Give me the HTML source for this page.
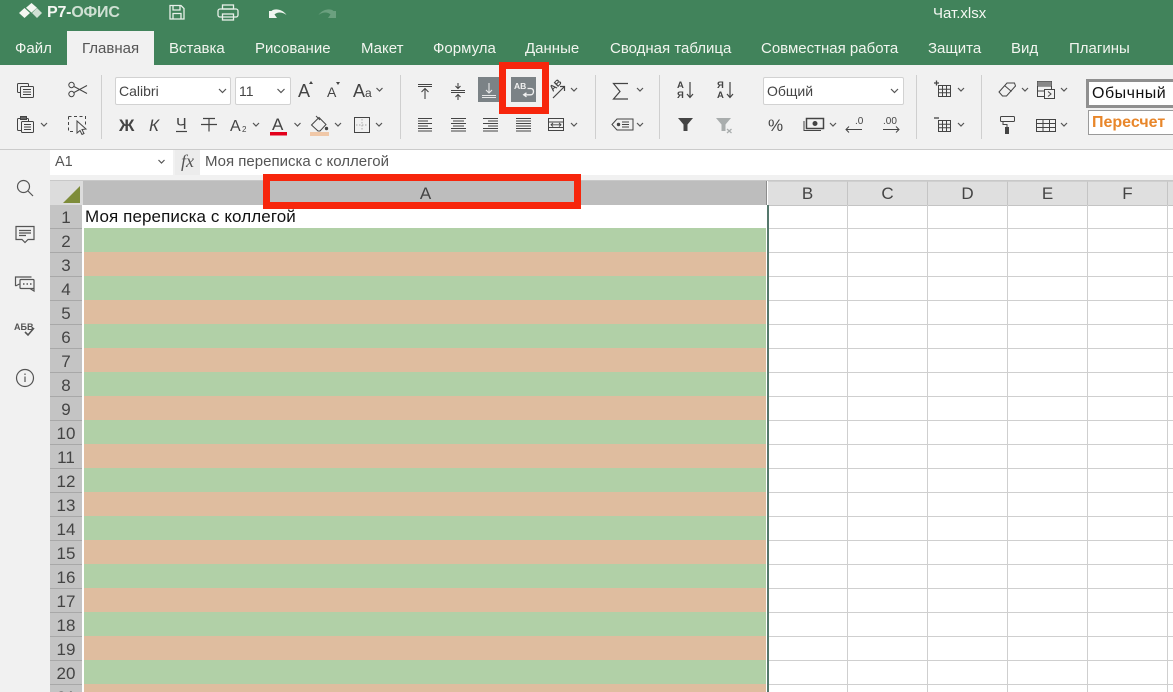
<!DOCTYPE html>
<html><head><meta charset="utf-8">
<style>
html,body{margin:0;padding:0;width:1173px;height:692px;overflow:hidden;background:#fff;font-family:"Liberation Sans",sans-serif}
#page{position:relative;width:1173px;height:692px;overflow:hidden}
.a{position:absolute}
#top{left:0;top:0;width:1173px;height:65px;background:#41835b}
.t{position:absolute;top:41px;font-size:15px;line-height:16px;color:#f2f5ef;white-space:nowrap}
#tb{left:0;top:65px;width:1173px;height:84px;background:#f1f1f1;border-bottom:1px solid #cbcbcb}
.box{position:absolute;background:#fff;border:1px solid #d2d2d2;border-radius:2px;box-sizing:border-box;font-size:14px;color:#444;line-height:26px;padding-left:3px}
.rn{position:absolute;left:50px;width:32px;height:23px;background:#c4c4c4;border-bottom:1px solid #a8a8a8;font-size:17px;line-height:25px;text-align:center;color:#444}
.ch{position:absolute;top:181px;height:23px;background:#dfdfdf;border-right:1px solid #c4c4c4;border-bottom:1px solid #c4c4c4;border-top:1px solid #cfcfcf;font-size:17px;line-height:24px;text-align:center;color:#444;box-sizing:content-box}
.band{position:absolute;left:84px;width:682px;height:24px}
.g{background:#b1d0a7}.o{background:#dfbd9f}
.hl{position:absolute;left:769px;width:404px;height:1px;background:#cfcfcf}
.vl{position:absolute;top:205px;width:1px;height:487px;background:#cfcfcf}
svg{position:absolute;left:0;top:0}
svg text{font-family:"Liberation Sans",sans-serif}
</style></head><body><div id="page">
<div class="a" id="top"></div>
<div class="a" style="left:67px;top:31px;width:87px;height:34px;background:#f1f1f1"></div>
<div class="t" style="left:15px">Файл</div>
<div class="t" style="left:82px;color:#555">Главная</div>
<div class="t" style="left:169px">Вставка</div>
<div class="t" style="left:255px">Рисование</div>
<div class="t" style="left:361px">Макет</div>
<div class="t" style="left:433px">Формула</div>
<div class="t" style="left:525px">Данные</div>
<div class="t" style="left:610px">Сводная таблица</div>
<div class="t" style="left:761px">Совместная работа</div>
<div class="t" style="left:928px">Защита</div>
<div class="t" style="left:1011px">Вид</div>
<div class="t" style="left:1069px">Плагины</div>
<div class="a" style="left:933px;top:6px;font-size:15px;line-height:16px;color:#f4f7f2">Чат.xlsx</div>
<div class="a" style="left:47px;top:3px;font-size:16px;line-height:20px;font-weight:bold;color:#f4f7f2;letter-spacing:-.2px">Р7-<span style="color:#cfe0d3">ОФИС</span></div>

<div class="a" id="tb"></div>
<div class="box" style="left:115px;top:77px;width:116px;height:28px">Calibri</div>
<div class="box" style="left:235px;top:77px;width:56px;height:28px">11</div>
<div class="box" style="left:763px;top:77px;width:141px;height:28px">Общий</div>
<div class="a" style="left:1086px;top:79px;width:87px;height:29px;box-sizing:border-box;border:3px solid #8f8f8f;border-right:0;background:#fff;font-size:16px;line-height:24px;color:#111;padding-left:3px;letter-spacing:.5px;white-space:nowrap;overflow:hidden">Обычный</div>
<div class="a" style="left:1088px;top:110px;width:85px;height:25px;box-sizing:border-box;border:1px solid #9a9a9a;border-right:0;background:#fff;font-size:16px;line-height:24px;color:#e8862a;font-weight:bold;padding-left:3px;white-space:nowrap;overflow:hidden">Пересчет</div>

<!-- formula bar -->
<div class="a" style="left:0;top:150px;width:1173px;height:31px;background:#f1f1f1"></div>
<div class="a" style="left:50px;top:150px;width:123px;height:25px;background:#fff;font-size:14.5px;line-height:24px;color:#555;text-indent:5px">A1</div>
<div class="a" style="left:175px;top:150px;width:25px;height:25px;background:#ececec;font-family:'Liberation Serif',serif;font-style:italic;font-size:18px;line-height:23px;text-align:center;color:#555">fx</div>
<div class="a" style="left:200px;top:150px;width:973px;height:25px;background:#fff;font-size:15px;line-height:24px;color:#555;text-indent:5px">Моя переписка с коллегой</div>
<div class="a" style="left:50px;top:175px;width:1123px;height:5px;background:#f1f1f1;border-bottom:1px solid #c8c8c8"></div>

<!-- sidebar -->
<div class="a" style="left:0;top:150px;width:50px;height:542px;background:#f1f1f1"></div>

<!-- headers -->
<div class="a" style="left:50px;top:181px;width:33px;height:24px;background:#dcdcdc"></div>
<div class="a" style="left:83px;top:181px;width:684px;height:24px;background:#bdbdbd;font-size:17px;line-height:25px;text-align:center;color:#444;padding-left:2px;box-sizing:border-box;border-right:1px solid #8d8d8d">A</div>
<div class="ch" style="left:768px;width:79px">B</div>
<div class="ch" style="left:848px;width:79px">C</div>
<div class="ch" style="left:928px;width:79px">D</div>
<div class="ch" style="left:1008px;width:79px">E</div>
<div class="ch" style="left:1088px;width:79px">F</div>
<div class="ch" style="left:1168px;width:5px;border-right:0"></div>

<!-- row numbers -->
<div class="rn" style="top:205px">1</div>
<div class="rn" style="top:229px">2</div>
<div class="rn" style="top:253px">3</div>
<div class="rn" style="top:277px">4</div>
<div class="rn" style="top:301px">5</div>
<div class="rn" style="top:325px">6</div>
<div class="rn" style="top:349px">7</div>
<div class="rn" style="top:373px">8</div>
<div class="rn" style="top:397px">9</div>
<div class="rn" style="top:421px">10</div>
<div class="rn" style="top:445px">11</div>
<div class="rn" style="top:469px">12</div>
<div class="rn" style="top:493px">13</div>
<div class="rn" style="top:517px">14</div>
<div class="rn" style="top:541px">15</div>
<div class="rn" style="top:565px">16</div>
<div class="rn" style="top:589px">17</div>
<div class="rn" style="top:613px">18</div>
<div class="rn" style="top:637px">19</div>
<div class="rn" style="top:661px">20</div>
<div class="rn" style="top:685px;height:7px;border:0;overflow:hidden">21</div>

<!-- bands -->
<div class="band g" style="top:228px"></div><div class="band o" style="top:252px"></div>
<div class="band g" style="top:276px"></div><div class="band o" style="top:300px"></div>
<div class="band g" style="top:324px"></div><div class="band o" style="top:348px"></div>
<div class="band g" style="top:372px"></div><div class="band o" style="top:396px"></div>
<div class="band g" style="top:420px"></div><div class="band o" style="top:444px"></div>
<div class="band g" style="top:468px"></div><div class="band o" style="top:492px"></div>
<div class="band g" style="top:516px"></div><div class="band o" style="top:540px"></div>
<div class="band g" style="top:564px"></div><div class="band o" style="top:588px"></div>
<div class="band g" style="top:612px"></div><div class="band o" style="top:636px"></div>
<div class="band g" style="top:660px"></div><div class="band o" style="top:684px;height:8px"></div>
<div class="a" style="left:85px;top:207px;font-size:17px;line-height:20px;color:#111;white-space:nowrap;letter-spacing:.1px">Моя переписка с коллегой</div>
<div class="a" style="left:767px;top:205px;width:2px;height:487px;background:#55786c"></div>

<!-- grid lines -->
<div class="hl" style="top:228px"></div><div class="hl" style="top:252px"></div><div class="hl" style="top:276px"></div><div class="hl" style="top:300px"></div><div class="hl" style="top:324px"></div><div class="hl" style="top:348px"></div><div class="hl" style="top:372px"></div><div class="hl" style="top:396px"></div><div class="hl" style="top:420px"></div><div class="hl" style="top:444px"></div><div class="hl" style="top:468px"></div><div class="hl" style="top:492px"></div><div class="hl" style="top:516px"></div><div class="hl" style="top:540px"></div><div class="hl" style="top:564px"></div><div class="hl" style="top:588px"></div><div class="hl" style="top:612px"></div><div class="hl" style="top:636px"></div><div class="hl" style="top:660px"></div><div class="hl" style="top:684px"></div>
<div class="vl" style="left:847px"></div><div class="vl" style="left:927px"></div><div class="vl" style="left:1007px"></div><div class="vl" style="left:1087px"></div><div class="vl" style="left:1167px"></div>

<svg width="1173" height="692" viewBox="0 0 1173 692" fill="none" stroke="#444" stroke-width="1">
<!-- logo -->
<g stroke="none"><path d="M31.500 3l5.500 4.800-5.500 4.800-5.500-4.800z" fill="#f4f7f2"/><path d="M24.500 8l5.500 5-5.500 5-5.500-5z" fill="#f4f7f2"/><path d="M37 8l5 5-5 5-5-5z" fill="#cfe0d3"/></g>
<!-- title icons -->
<g stroke="#e8f0e9" stroke-width="1.300">
<path d="M170 5.500h11l3 3v10.500h-14z"/><path d="M173 5.500v4.500h7v-4.500M173 19v-5.500h8v5.500"/>
<rect x="222.500" y="5" width="11" height="4"/><rect x="218" y="9" width="20" height="8" rx="2"/><rect x="222.500" y="14" width="11" height="6"/>
</g>
<path d="M269 18v-7h2.500c3-3 11-2 15 4-4-3-9-3.500-12-.5l2.500 3.500z" fill="#f0f5f0" stroke="none"/>
<path d="M336 18v-7h-2.500c-3-3-11-2-15 4 4-3 9-3.500 12-.5l-2.500 3.500z" fill="#6ba07f" stroke="none"/>

<!-- dividers -->
<g stroke="#cfcfcf"><path d="M101.500 75v64M400.500 75v64M595.500 75v64M659.500 75v64M916.500 75v64M981.500 75v64"/></g>

<!-- copy -->
<rect x="17.500" y="83.500" width="11" height="9" rx="1"/><rect x="20.500" y="86.500" width="13" height="11" rx="1" fill="#f1f1f1"/><path d="M23 89.500h8M23 92h8M23 94.500h8"/>
<!-- cut -->
<circle cx="71.500" cy="85" r="2.700"/><circle cx="71.500" cy="94" r="2.700"/><path d="M74 86.500l13 7M74 92.500l13-7"/>
<!-- paste -->
<rect x="17.500" y="118.500" width="11" height="12" rx="1"/><rect x="20.500" y="116.500" width="6" height="3" fill="#666"/><rect x="21.500" y="121.500" width="12" height="11" rx="1" fill="#f1f1f1"/><path d="M24 124.500h7M24 127h7M24 129.500h7"/>
<!-- select -->
<path d="M68.500 116.500h17v8M68.500 116.500v15h7" stroke-dasharray="3 2.500"/><path d="M77 121v12l3-2.500 2 4 2-1-2-4 4-.5z" fill="#f1f1f1"/>

<!-- chevrons -->
<g stroke="#555" stroke-width="1.200">
<path d="M219 89l3.500 3.500 3.500-3.500M277.500 89l3.500 3.500 3.500-3.500M376.500 88l3 3 3-3M41 123l3 3 3-3M253 123l3 3 3-3M294.500 123l3 3 3-3M335 123l3 3 3-3M376 123l3 3 3-3"/>
<path d="M571 88l3 3 3-3M571 123l3 3 3-3M637 88l3 3 3-3M637 123l3 3 3-3M891 89l3.500 3.500 3.500-3.500M830 123l3 3 3-3M958 88l3 3 3-3M958 123l3 3 3-3M1022 88l3 3 3-3M1061 88l3 3 3-3M1061 123l3 3 3-3"/>
</g>

<!-- font size icons -->
<g stroke="none" fill="#444">
<text x="298" y="97" font-size="18">A</text><path d="M309 84l2-3 2 3z"/>
<text x="327" y="97" font-size="14">A</text><path d="M336 82l2 3 2-3z"/>
<text x="353" y="97" font-size="18">A</text><text x="365" y="97" font-size="12">a</text>
<text x="119" y="131" font-size="17" font-weight="bold">Ж</text>
<text x="149" y="131" font-size="17" font-style="italic">К</text>
<text x="176" y="129" font-size="16">Ч</text>
<text x="230" y="131" font-size="16">A</text><text x="242" y="132" font-size="8">2</text>
<text x="272" y="130" font-size="17">A</text>
</g>
<path d="M176 131.500h11" stroke-width="1.200"/>
<path d="M203 118.500h12M209 118.500v13M201 124.500h16" stroke-width="1.200"/>
<rect x="270" y="132" width="17" height="3.500" fill="#e3001b" stroke="none"/>
<rect x="310" y="132" width="19" height="4" fill="#f0c8a8" stroke="none"/>
<path d="M311.500 125l7.500-7.500 7 7-6 6.500h-2z" /><path d="M316 116l4 4"/><circle cx="326.500" cy="128.500" r="1.700" fill="#444" stroke="none"/>
<rect x="354.500" y="117.500" width="15" height="15"/><path d="M362 119v11M356 125h12" stroke="#aaa" stroke-dasharray="1.500 1.500"/>

<!-- align top row -->
<path d="M418 84.500h14M418 86.500h14M425 99v-10M421.500 92l3.500-3.500 3.500 3.500" stroke-width="1.100"/>
<path d="M451 90.500h14M451 92.500h14M458 83v5M455.500 86l2.500 2.500 2.500-2.500M458 100v-5M455.500 97l2.500-2.500 2.500 2.500" stroke-width="1.100"/>
<rect x="478" y="77" width="22" height="25" fill="#7b8286" stroke="none"/>
<path d="M482 95.500h14M482 97.500h14M489 83v10M486 90l3 3 3-3" stroke="#e8e8e8" stroke-width="1.100"/>
<rect x="511" y="77" width="25" height="25" fill="#7b8286" stroke="none"/>
<text x="514" y="89" font-size="8.500" font-weight="bold" fill="#f1f1f1" stroke="none">AB</text>
<path d="M527.500 88.500h3c2 0 3 1.300 3 3s-1 3.300-3 3.300h-7M526.500 92.800l-2.800 2 2.800 2" stroke="#f1f1f1" stroke-width="1.300"/>
<!-- red frames -->
<rect x="502.500" y="65.500" width="43" height="45" stroke="#f7260c" stroke-width="7"/>
<rect x="266.500" y="177.500" width="311" height="28" stroke="#f7260c" stroke-width="7"/>
<!-- orientation -->
<text x="0" y="0" font-size="9" font-weight="bold" fill="#444" stroke="none" transform="translate(553 92) rotate(-45)">AB</text>
<path d="M553 98l11-11M560 86.500h4.500v4.500" stroke-width="1.200"/>
<!-- align second row -->
<g stroke-width="1.100">
<path d="M418 118.500h14M418 121h10M418 123.500h14M418 126h10M418 128.500h14M418 131h14"/>
<path d="M451 118.500h15M453 121h11M451 123.500h15M453 126h11M451 128.500h15M451 131h15"/>
<path d="M483 118.500h15M488 121h10M483 123.500h15M488 126h10M483 128.500h15M483 131h15"/>
<path d="M516 118.500h15M516 121h15M516 123.500h15M516 126h15M516 128.500h15M516 131h15"/>
</g>
<rect x="548.500" y="118.500" width="15" height="12"/><path d="M548.500 122h15M548.500 127.500h15M551 124.800h10M553 123l-2 1.800 2 1.800M559 123l2 1.800-2 1.800" stroke-width=".9"/>
<!-- sum -->
<path d="M628 83.500h-14.500l6.500 8-6.500 7.500h14.500" stroke-width="1.200"/>
<path d="M612 124.500l5-5.500h16v11h-16z"/><circle cx="618.500" cy="124.500" r="1.200" fill="#444"/><path d="M622 122h7M622 124.500h7M622 127h7"/>
<!-- sort -->
<g stroke="none" fill="#444" font-weight="bold" font-size="9.500">
<text x="677" y="88">А</text><text x="677" y="98">Я</text>
<text x="717" y="88">Я</text><text x="717" y="98">А</text>
</g>
<path d="M690 82v15M687 94l3 3.500 3-3.500M730 82v15M727 94l3 3.500 3-3.500" stroke-width="1.200"/>
<!-- filter -->
<path d="M678 118h15l-5.500 6.500v6.500l-4-0v-6.500z" fill="#444" stroke="none"/>
<path d="M716 118h15l-5.500 6.500v6.500l-4-0v-6.500z" fill="#a9adad" stroke="none"/>
<path d="M727 129l4.500 4M731.500 129l-4.500 4" stroke="#a9adad" stroke-width="1.300"/>
<!-- % -->
<text x="768" y="131" font-size="17" fill="#444" stroke="none">%</text>
<!-- money -->
<rect x="806.500" y="118.500" width="17" height="10" stroke-width="1.500"/><circle cx="815" cy="123.500" r="2.500" fill="#444" stroke="none"/><path d="M804 121v9.500h17" />
<text x="855" y="124" font-size="10" fill="#444" stroke="none">.0</text>
<path d="M846 129.500h16M849 126.500l-3 3 3 3"/>
<text x="883" y="124" font-size="10" fill="#444" stroke="none">.00</text>
<path d="M883 129.500h16M896 126.500l3 3-3 3"/>
<!-- insert/delete cells -->
<g stroke-width="1">
<rect x="938.500" y="85.500" width="12" height="11"/><path d="M942.500 85.500v11M946.500 85.500v11M938.500 89.200h12M938.500 92.800h12"/>
<path d="M934 83h5M936.500 80.500v5" stroke-width="1.300"/>
<rect x="938.500" y="120.500" width="12" height="11"/><path d="M942.500 120.500v11M946.500 120.500v11M938.500 124.200h12M938.500 127.800h12"/>
<path d="M934 118h5" stroke-width="1.300"/>
</g>
<!-- eraser -->
<path d="M999 92l8-9h7.500l1 3-9 10h-4z"/><path d="M1004.500 85.500l7 6"/>
<!-- cond format -->
<rect x="1037.500" y="81.500" width="14" height="15" /><path d="M1037.500 86h14M1037.500 91h9"/><rect x="1037.500" y="81.500" width="14" height="4.500" fill="#888" stroke="none"/>
<rect x="1044.500" y="89.500" width="10" height="9" fill="#f1f1f1"/><path d="M1048 91.500l3 2.500-3 2.500"/>
<!-- roller -->
<rect x="1000.500" y="116.500" width="14" height="5" rx="1"/><path d="M1003 121.500v3h4v3"/><rect x="1005" y="127" width="4" height="7" fill="#444" stroke="none"/>
<!-- table -->
<rect x="1036.500" y="119.500" width="19" height="12"/><path d="M1036.500 123.500h19M1036.500 127.500h19M1043 119.500v12M1049.500 119.500v12"/>

<!-- corner triangle -->
<path d="M80 186v17h-17z" fill="#7e8c3a" stroke="none"/>
<!-- formula chevron -->
<g stroke="#555" stroke-width="1.200"><path d="M158.500 160l3 3 3-3"/></g>

<!-- sidebar icons -->
<g stroke="#555" stroke-width="1.200">
<circle cx="23.500" cy="186.500" r="6"/><path d="M28 191l5 5"/>
<path d="M16 226.500h18v13h-6l-3 3-3-3h-6z"/><path d="M19 230.500h12M19 233h12M19 235.500h7"/>
<path d="M15.500 286v-9h16M15.500 286l4 -2"/><rect x="20" y="279.500" width="14" height="9" rx="1"/><path d="M30 288.500l4 2.500v-3"/>
<path d="M23 284h1.500M26.500 284h1.500M30 284h1.500" stroke-width="1.500"/>
<path d="M25 332l3 3 6-7" stroke-width="1.600"/>
<circle cx="25" cy="378" r="8.500"/><path d="M25 376.500v5.500M25 373.500v1.500"/>
</g>
<text x="14" y="330" font-size="9" font-weight="bold" fill="#555" stroke="none">АБВ</text>
</svg>
</div></body></html>
